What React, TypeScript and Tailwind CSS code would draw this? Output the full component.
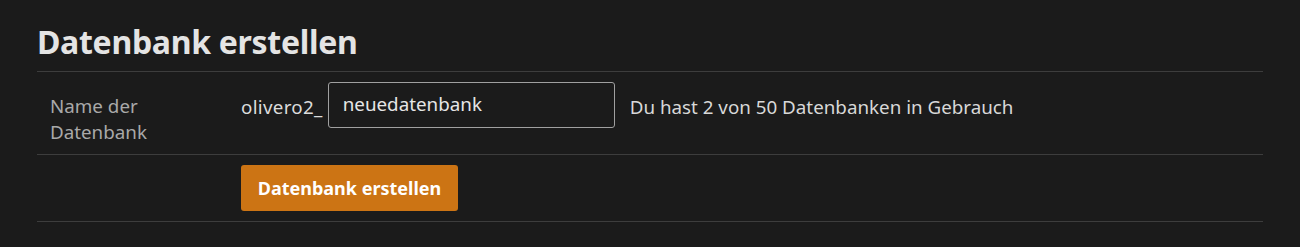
export default function App() {
  return (
    <div
      className="w-[1300px] h-[247px] bg-[#1b1b1b] text-[#e2e2e2] px-[37px] pt-[20px]"
      style={{ fontFamily: '"Noto Sans", "Open Sans", sans-serif' }}
    >
      <h1 className="text-[32px] leading-[44px] font-bold text-[#e4e4e4] pb-[7px] tracking-[-0.3px]">
        Datenbank erstellen
      </h1>

      <div className="border-t border-[#3d3d3d]">
        {/* Name row */}
        <div className="flex items-start border-b border-[#3d3d3d] h-[83px]">
          <div className="w-[204px] pl-[13px] pt-[21px] text-[18.8px] leading-[26px] text-[#a9a9a9]">
            Name der
            <br />
            Datenbank
          </div>
          <div className="flex items-center pt-[10px]">
            <span className="text-[18.8px] text-[#dcdcdc] pt-[4px] tracking-[0.3px]">olivero2_</span>
            <input
              className="ml-[5px] w-[287px] h-[46px] rounded-[3px] border border-[#a0a0a0] bg-[#1b1b1b] px-[14px] pb-[2px] text-[18.8px] text-[#e6e6e6] outline-none"
              defaultValue="neuedatenbank"
            />
            <span className="ml-[15px] pt-[4px] text-[18.8px] text-[#d8d8d8]">
              Du hast 2 von 50 Datenbanken in Gebrauch
            </span>
          </div>
        </div>

        {/* Action row */}
        <div className="flex border-b border-[#3d3d3d] h-[67px]">
          <div className="w-[204px]" />
          <div className="pt-[10px]">
            <button className="h-[46px] w-[217px] rounded-[3px] bg-[#cc7414] text-[18px] font-bold text-white">
              Datenbank erstellen
            </button>
          </div>
        </div>
      </div>
    </div>
  );
}
